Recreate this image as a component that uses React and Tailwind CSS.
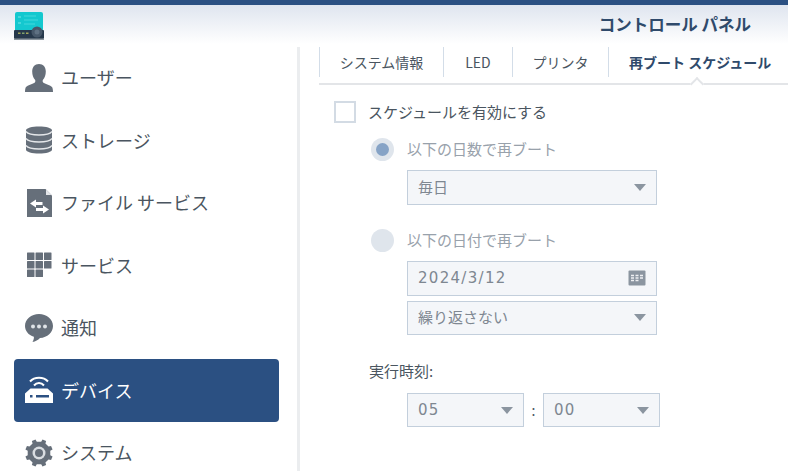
const font = { fontFamily: '"Noto Sans CJK JP", "Noto Sans", sans-serif' };
const digits = { fontFamily: '"DejaVu Sans", sans-serif' };

const gearPath = () => {
  const pts = [];
  for (let i = 0; i < 8; i++) {
    const a = (i * Math.PI) / 4 - Math.PI / 8;
    [[-0.2, 11.5], [-0.14, 14], [0.14, 14], [0.2, 11.5]].forEach(([d, r]) => {
      pts.push(`${(14 + r * Math.cos(a + d)).toFixed(2)},${(14 + r * Math.sin(a + d)).toFixed(2)}`);
    });
  }
  return pts.join(" ");
};

function UserIcon() {
  return (
    <svg width="28" height="28" viewBox="0 0 28 28" fill="#666f7a">
      <path d="M14 0c4.300 0 6.800 3 6.800 7.600 0 3.400-1.100 6.400-2.800 8.200-.6.800-.5 2.200.4 2.900 2.400 1.500 6.900 2.300 8.600 4.300.6.800 1 3 1 5H0c0-2 .4-4.200 1-5 1.700-2 6.200-2.800 8.600-4.300.9-.7 1-2.100.4-2.900-1.700-1.800-2.800-4.800-2.800-8.200C7.200 3 9.700 0 14 0z" />
    </svg>
  );
}

function StorageIcon() {
  return (
    <svg width="28" height="28" viewBox="0 0 28 28">
      <path d="M1 4.500C1 2 7 .5 14 .5S27 2 27 4.500v19c0 2.500-6 4-13 4s-13-1.500-13-4z" fill="#666f7a" />
      <path d="M1 5.500C3 8 8 9 14 9s11-1 13-3.500M1 12.500C3 15 8 16 14 16s11-1 13-3.500M1 19.500C3 22 8 23 14 23s11-1 13-3.500" fill="none" stroke="#e4e6e9" strokeWidth="1.300" />
    </svg>
  );
}

function FileIcon() {
  return (
    <svg width="28" height="28" viewBox="0 0 28 28">
      <path d="M2 0h18.500L27 6.500V28H2z" fill="#666f7a" />
      <path d="M21 .5L26.500 6H21z" fill="#e4e6e9" />
      <path d="M5 14.500l6-4v2.500h6.500v3H11v2.500z" fill="#fff" />
      <path d="M24 20.500l-6-4V19h-7v3h7v2.500z" fill="#fff" />
    </svg>
  );
}

function GridIcon() {
  const cells = [
    [2, 1.500], [10.500, 1.500], [19, 1.500],
    [2, 10], [10.500, 10], [19, 10],
    [2, 18.500], [10.500, 18.500],
  ];
  return (
    <svg width="28" height="28" viewBox="0 0 28 28" fill="#666f7a">
      {cells.map(([x, y]) => (
        <rect key={`${x}-${y}`} x={x} y={y} width="7.500" height="7.500" rx="0.5" />
      ))}
    </svg>
  );
}

function ChatIcon() {
  return (
    <svg width="28" height="28" viewBox="0 0 28 28" fill="#666f7a">
      <path d="M14 0c7.700 0 14 5.200 14 12 0 6.500-5.600 11.600-13 12-2 2-4.500 3.500-7.500 4 1-1.500 1.500-3.200 1.400-5.200C3.400 21 0 16.900 0 12 0 5.200 6.300 0 14 0z" />
      <circle cx="8" cy="12.500" r="2" fill="#dfe3e7" />
      <circle cx="14" cy="12.500" r="2" fill="#dfe3e7" />
      <circle cx="20" cy="12.500" r="2" fill="#dfe3e7" />
    </svg>
  );
}

function RouterIcon() {
  return (
    <svg width="28" height="28" viewBox="0 0 28 28" fill="none">
      <path d="M5 5.500C9.500 .5 18.500 .5 23 5.500" stroke="#fff" strokeWidth="2" />
      <path d="M9 9.500C11.800 6.300 16.200 6.300 19 9.500" stroke="#fff" strokeWidth="2" />
      <path d="M5.500 12.500h17L28 17.500V27H0v-9.500z" fill="#fff" />
      <rect x="11" y="19" width="13" height="2.500" fill="#2b5082" />
      <rect x="5" y="19" width="2.500" height="2.500" fill="#2b5082" />
    </svg>
  );
}

function GearIcon() {
  return (
    <svg width="28" height="28" viewBox="0 0 28 28">
      <polygon points={gearPath()} fill="#666f7a" />
      <circle cx="14" cy="14" r="6.500" fill="#d9dde1" />
      <circle cx="14" cy="14" r="4" fill="#666f7a" />
    </svg>
  );
}

function Logo() {
  return (
    <svg width="32" height="28" viewBox="0 0 32 28" className="mt-[2px]">
      <rect x="1" y="0" width="28" height="20" rx="2" fill="#14c8cf" />
      <path d="M10 4h12M10 8h14M10 12h11" stroke="#45d8dc" strokeWidth="1" />
      <rect x="4" y="4" width="3" height="2" fill="#45d8dc" />
      <rect x="4" y="10" width="3" height="2" fill="#45d8dc" />
      <rect x="0" y="18" width="30" height="9" rx="1" fill="#26384b" />
      <rect x="0" y="26.500" width="30" height="1.500" fill="#8c969e" />
      <circle cx="23" cy="20" r="5.500" fill="#47586a" />
      <circle cx="23" cy="20" r="2.500" fill="#5f7183" />
      <rect x="4" y="20.500" width="2.500" height="1.500" fill="#a4a65a" />
      <rect x="8" y="20.500" width="2.500" height="1.500" fill="#7fa36c" />
      <rect x="12" y="20.500" width="2.500" height="1.500" fill="#a4a65a" />
    </svg>
  );
}

function Caret() {
  return <span className="h-0 w-0 border-x-[6.5px] border-t-[7px] border-x-transparent border-t-[#8b95a0]" />;
}

function CalendarIcon() {
  return (
    <svg width="18" height="16" viewBox="0 0 18 16">
      <rect x="0.500" y="0.500" width="17" height="15" rx="1" fill="#8b95a0" />
      <path d="M3 5.500h3M7.500 5.500h3M12 5.500h3M3 8h3M7.500 8h3M12 8h3M3 10.500h3M7.500 10.500h3" stroke="#eef0f2" strokeWidth="1.300" />
    </svg>
  );
}

function Field({ value, width = "w-[250px]", height = "h-[35px]", right, num }) {
  return (
    <div className={`flex ${height} ${width} items-center justify-between border border-[#c3cfdc] bg-[#f4f6f9] px-[10px] text-[15px] text-[#7e8791]`}>
      <span className={num ? "tracking-[1.300px]" : ""} style={num ? digits : undefined}>{value}</span>
      {right || <Caret />}
    </div>
  );
}

const navItems = [
  { label: "ユーザー", icon: UserIcon },
  { label: "ストレージ", icon: StorageIcon },
  { label: "ファイル サービス", icon: FileIcon },
  { label: "サービス", icon: GridIcon },
  { label: "通知", icon: ChatIcon },
  { label: "デバイス", icon: RouterIcon, active: true },
  { label: "システム", icon: GearIcon },
];

const tabs = [
  { label: "システム情報", width: "w-[124px]" },
  { label: "LED", width: "w-[69px]" },
  { label: "プリンタ", width: "w-[96px]" },
];

export default function App() {
  return (
    <div className="flex h-[471px] w-[788px] flex-col overflow-hidden bg-white" style={font}>
      <div className="h-[5px] shrink-0 bg-[#2b5082]" />
      <header className="flex h-[39px] shrink-0 items-center justify-between bg-gradient-to-b from-[#dfe5ef] to-white pl-[14px] pr-[37px]">
        <Logo />
        <h1 className="text-[16.500px] font-bold text-[#2f4a6b]">コントロール パネル</h1>
      </header>

      <div className="mt-[3px] flex min-h-0 flex-1">
        <aside className="w-[300px] shrink-0 border-r-[3px] border-[#ebedef] pl-[14px] pr-[18px]">
          <div className="-mt-[0.5px]">
            {navItems.map(({ label, icon: Icon, active }) => (
              <div
                key={label}
                className={`flex h-[62.500px] items-center gap-[8px] rounded-[4px] pl-[11px] text-[18px] ${active ? "bg-[#2b5082] text-white" : "text-[#4a5560]"}`}
              >
                <Icon />
                <span>{label}</span>
              </div>
            ))}
          </div>
        </aside>

        <main className="min-w-0 flex-1">
          <div className="relative ml-[19px] flex h-[38px] border-b-2 border-[#e3e5e8] text-[14px] text-[#4a5560]">
            {tabs.map((tab) => (
              <div key={tab.label} className={`flex h-[30px] ${tab.width} items-center justify-center border-l border-[#d3dde8]`}>
                {tab.label}
              </div>
            ))}
            <div className="flex h-[30px] items-center border-l border-[#d3dde8] pl-[20px] font-bold text-[#2f4a6b]">
              再ブート スケジュール
            </div>
            <span className="absolute bottom-[-6px] left-[373px] h-[10px] w-[10px] rotate-45 border-l-2 border-t-2 border-[#e3e5e8] bg-white" />
          </div>

          <div className="pl-[34px] pt-[16px]">
            <label className="flex items-center gap-[12px] text-[15px] text-[#4a5560]">
              <span className="h-[22px] w-[22px] border-2 border-[#d3dbe4] bg-white" />
              スケジュールを有効にする
            </label>

            <div className="ml-[37px] mt-[14px] flex items-center gap-[13px] text-[15px] text-[#98a1ab]">
              <span className="flex h-[23px] w-[23px] items-center justify-center rounded-full bg-[#dfe5ec]">
                <span className="h-[13px] w-[13px] rounded-full bg-[#86a3c6]" />
              </span>
              以下の日数で再ブート
            </div>
            <div className="ml-[73px] mt-[9px]">
              <Field value="毎日" />
            </div>

            <div className="ml-[37px] mt-[24px] flex items-center gap-[13px] text-[15px] text-[#98a1ab]">
              <span className="h-[23px] w-[23px] rounded-full bg-[#dfe5ec]" />
              以下の日付で再ブート
            </div>
            <div className="ml-[73px] mt-[9px] flex flex-col gap-[5px]">
              <Field value="2024/3/12" right={<CalendarIcon />} num />
              <Field value="繰り返さない" height="h-[34px]" />
            </div>

            <p className="ml-[35px] mt-[25px] text-[15px] text-[#4a5560]">実行時刻:</p>

            <div className="ml-[73px] mt-[11px] flex items-center text-[14px] text-[#7e8791]">
              <Field value="05" width="w-[117px]" height="h-[34px]" num />
              <span className="w-[19px] text-center text-[#4a5560]">:</span>
              <Field value="00" width="w-[117px]" height="h-[34px]" num />
            </div>
          </div>
        </main>
      </div>
    </div>
  );
}
